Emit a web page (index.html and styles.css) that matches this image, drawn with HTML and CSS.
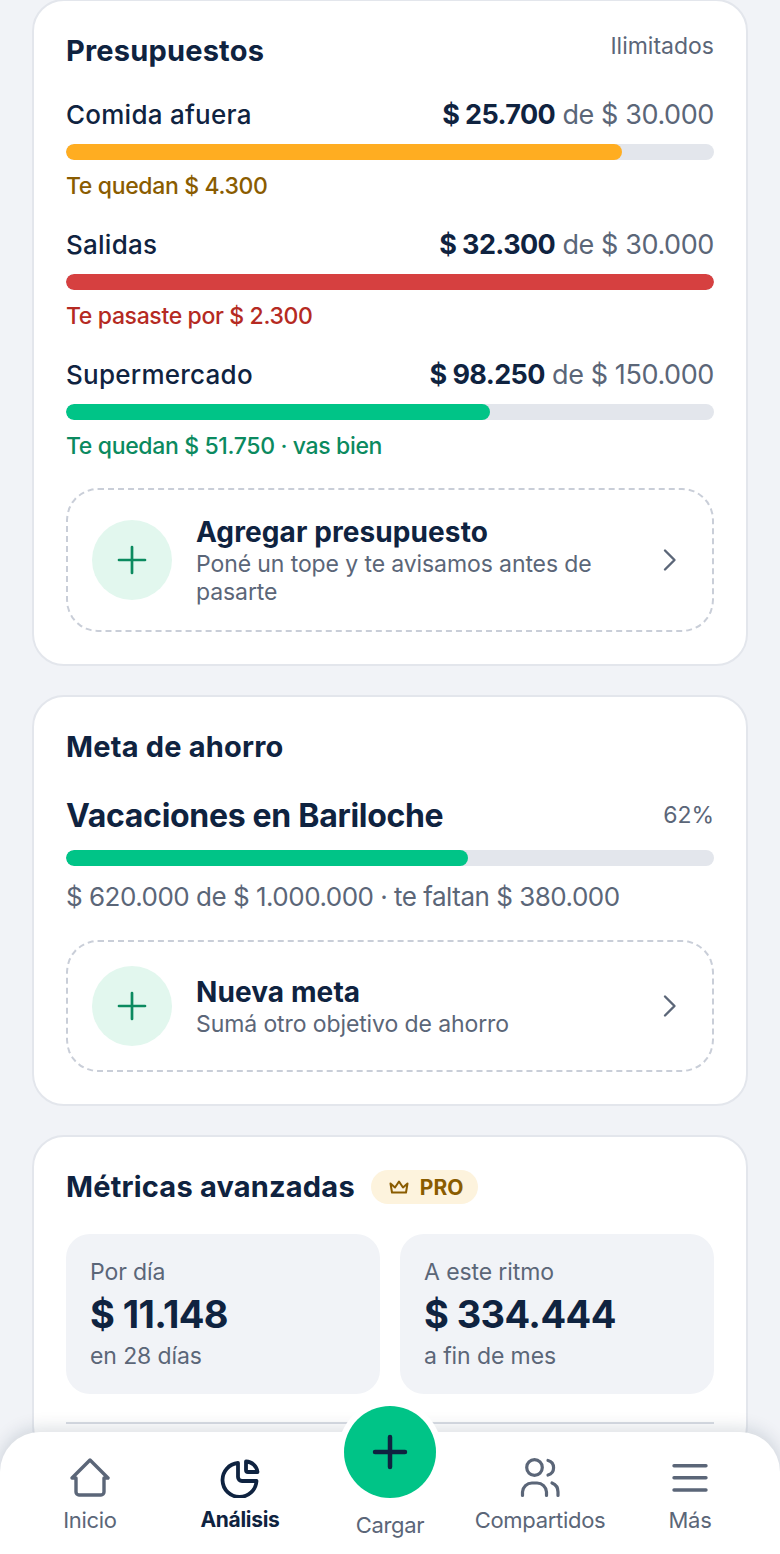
FILE: index.html
```html
<!DOCTYPE html>
<html lang="es">
<head>
  <meta charset="UTF-8">
  <meta name="viewport" content="width=device-width, initial-scale=1.0">
  <title>Análisis</title>
  <link rel="stylesheet" href="styles.css">
</head>
<body>
  <main class="screen">
    <section class="card">
      <div class="card-head">
        <h2>Presupuestos</h2>
        <span class="card-note">Ilimitados</span>
      </div>

      <div class="budget">
        <div class="budget-row">
          <span class="budget-name">Comida afuera</span>
          <span class="budget-amount"><strong>$ 25.700</strong> de $ 30.000</span>
        </div>
        <div class="bar"><div class="bar-fill fill-amber" style="width: 85.8%"></div></div>
        <p class="budget-msg msg-amber">Te quedan $ 4.300</p>
      </div>

      <div class="budget">
        <div class="budget-row">
          <span class="budget-name">Salidas</span>
          <span class="budget-amount"><strong>$ 32.300</strong> de $ 30.000</span>
        </div>
        <div class="bar"><div class="bar-fill fill-red" style="width: 100%"></div></div>
        <p class="budget-msg msg-red">Te pasaste por $ 2.300</p>
      </div>

      <div class="budget">
        <div class="budget-row">
          <span class="budget-name">Supermercado</span>
          <span class="budget-amount"><strong>$ 98.250</strong> de $ 150.000</span>
        </div>
        <div class="bar"><div class="bar-fill fill-green" style="width: 65.5%"></div></div>
        <p class="budget-msg msg-green">Te quedan $ 51.750 · vas bien</p>
      </div>

      <div class="add-box add-budget">
        <div class="add-circle">
          <svg width="32" height="32" viewBox="0 0 32 32" fill="none" stroke="#0b8a5f" stroke-width="2.7" stroke-linecap="round"><path d="M16 3v26M3 16h26"/></svg>
        </div>
        <div class="add-text">
          <div class="add-title">Agregar presupuesto</div>
          <div class="add-sub">Poné un tope y te avisamos antes de pasarte</div>
        </div>
        <svg class="chevron" width="16" height="24" viewBox="0 0 16 24" fill="none" stroke="#5b6678" stroke-width="2.4" stroke-linecap="round" stroke-linejoin="round"><path d="M3 2.500l9.500 9.500-9.500 9.500"/></svg>
      </div>
    </section>

    <section class="card">
      <h2>Meta de ahorro</h2>
      <div class="goal-row">
        <span class="goal-name">Vacaciones en Bariloche</span>
        <span class="goal-pct">62%</span>
      </div>
      <div class="bar"><div class="bar-fill fill-green" style="width: 62%"></div></div>
      <p class="goal-detail">$ 620.000 de $ 1.000.000 · te faltan $ 380.000</p>

      <div class="add-box add-goal">
        <div class="add-circle">
          <svg width="32" height="32" viewBox="0 0 32 32" fill="none" stroke="#0b8a5f" stroke-width="2.7" stroke-linecap="round"><path d="M16 3v26M3 16h26"/></svg>
        </div>
        <div class="add-text">
          <div class="add-title">Nueva meta</div>
          <div class="add-sub">Sumá otro objetivo de ahorro</div>
        </div>
        <svg class="chevron" width="16" height="24" viewBox="0 0 16 24" fill="none" stroke="#5b6678" stroke-width="2.4" stroke-linecap="round" stroke-linejoin="round"><path d="M3 2.500l9.500 9.500-9.500 9.500"/></svg>
      </div>
    </section>

    <section class="card">
      <div class="metrics-head">
        <h2>Métricas avanzadas</h2>
        <span class="pro">
          <svg width="20" height="14" viewBox="0 0 20 14" fill="none" stroke="#8a5c00" stroke-width="2" stroke-linejoin="round" stroke-linecap="round"><path d="M1.500 3.500L6 7.500l4-6 4 6 4.500-4-1.500 9H3z"/></svg>
          PRO
        </span>
      </div>
      <div class="metrics">
        <div class="metric">
          <div class="metric-label">Por día</div>
          <div class="metric-value">$ 11.148</div>
          <div class="metric-label">en 28 días</div>
        </div>
        <div class="metric">
          <div class="metric-label">A este ritmo</div>
          <div class="metric-value">$ 334.444</div>
          <div class="metric-label">a fin de mes</div>
        </div>
      </div>
      <div class="divider"></div>
    </section>
  </main>

  <nav class="tabbar">
    <div class="tab">
      <svg width="40" height="40" viewBox="0 0 40 40" fill="none" stroke="#5b6678" stroke-width="3.400" stroke-linecap="round" stroke-linejoin="round"><path d="M2 20L20 2l18 18h-4v14a3 3 0 0 1-3 3H9a3 3 0 0 1-3-3V20z"/></svg>
      <span>Inicio</span>
    </div>
    <div class="tab tab-active">
      <svg width="40" height="40" viewBox="0 0 40 40" fill="none" stroke="#0f2340" stroke-width="3.800" stroke-linecap="round" stroke-linejoin="round"><path d="M18 5A17 17 0 1 0 36.500 23H22a4 4 0 0 1-4-4z"/><path d="M26 3.500V12a2 2 0 0 0 2 2h9.500A12 12 0 0 0 26 3.500z"/></svg>
      <span>Análisis</span>
    </div>
    <div class="tab tab-add">
      <div class="fab">
        <svg width="40" height="40" viewBox="0 0 40 40" fill="none" stroke="#0f2340" stroke-width="4.500" stroke-linecap="round"><path d="M20 5v30M5 20h30"/></svg>
      </div>
      <span>Cargar</span>
    </div>
    <div class="tab">
      <svg width="40" height="40" viewBox="0 0 40 40" fill="none" stroke="#5b6678" stroke-width="3.200" stroke-linecap="round" stroke-linejoin="round"><circle cx="14.500" cy="9.500" r="7.800"/><path d="M28 2.500a7.500 7.500 0 0 1 0 14.500M2.500 37.500V34a9.500 9.500 0 0 1 9.500-9h5a9.500 9.500 0 0 1 9.500 9v3.500M32 25a9.500 9.500 0 0 1 6 9v3.500"/></svg>
      <span>Compartidos</span>
    </div>
    <div class="tab">
      <svg width="40" height="40" viewBox="0 0 40 40" fill="none" stroke="#5b6678" stroke-width="3.400" stroke-linecap="round"><path d="M4 7.700h32M4 19.800h32M4 32h32"/></svg>
      <span>Más</span>
    </div>
  </nav>
</body>
</html>
```

FILE: styles.css
```css
* {
  box-sizing: border-box;
}

html, body {
  margin: 0;
  padding: 0;
}

body {
  width: 780px;
  height: 1554px;
  overflow: hidden;
  position: relative;
  background: #f1f3f7;
  font-family: 'Inter', 'Noto Sans', sans-serif;
  color: #0f2340;
}

.screen {
  display: flex;
  flex-direction: column;
  gap: 29px;
  padding: 0 32px;
  margin-top: -1px;
}

.card {
  background: #fff;
  border: 2px solid #e3e6ec;
  border-radius: 32px;
  padding: 32px;
}

h2 {
  margin: 0;
  font-size: 29px;
  line-height: 36px;
  font-weight: 700;
  letter-spacing: 0.2px;
}

.card-head {
  display: flex;
  justify-content: space-between;
  align-items: flex-start;
  margin-bottom: 25px;
}

.card-note {
  font-size: 23px;
  line-height: 26px;
  color: #5b6678;
}

.budget {
  margin-bottom: 22px;
}

.budget-row {
  display: flex;
  justify-content: space-between;
  align-items: center;
  height: 40px;
  margin-bottom: 10px;
}

.budget-name {
  font-size: 26px;
  font-weight: 500;
  letter-spacing: 0.25px;
}

.budget-amount {
  font-size: 27px;
  color: #5b6678;
  letter-spacing: -0.4px;
}

.budget-amount strong {
  color: #0f2340;
  font-weight: 700;
  letter-spacing: -0.6px;
}

.bar {
  height: 16px;
  border-radius: 8px;
  background: #e3e6ec;
  overflow: hidden;
}

.bar-fill {
  height: 100%;
  border-radius: 8px;
}

.fill-amber { background: #ffad21; }
.fill-red { background: #d64040; }
.fill-green { background: #00c487; }

.budget-msg {
  margin: 10px 0 0;
  font-size: 23px;
  line-height: 32px;
  font-weight: 550;
  letter-spacing: -0.35px;
}

.msg-amber { color: #8a5c00; }
.msg-red { color: #b52a22; }
.msg-green { color: #0b8a5f; }

.add-box {
  display: flex;
  align-items: center;
  gap: 24px;
  border: 2px dashed #c9ced8;
  border-radius: 32px;
  padding: 0 34px 0 24px;
}

.add-budget {
  height: 144px;
  margin-top: 26px;
}

.add-goal {
  height: 132px;
  margin-top: 25px;
}

.add-circle {
  flex: none;
  width: 80px;
  height: 80px;
  border-radius: 50%;
  background: #e2f7ee;
  display: flex;
  align-items: center;
  justify-content: center;
}

.add-text {
  flex: 1;
  padding-top: 2px;
}

.add-title {
  font-size: 28px;
  line-height: 32px;
  font-weight: 700;
  letter-spacing: 0.1px;
}

.add-sub {
  margin-top: 2px;
  font-size: 23px;
  line-height: 28px;
  color: #5b6678;
  letter-spacing: -0.1px;
}

.chevron {
  flex: none;
}

.goal-row {
  display: flex;
  justify-content: space-between;
  align-items: center;
  margin-top: 30px;
  margin-bottom: 15px;
  height: 40px;
}

.goal-name {
  font-size: 32px;
  font-weight: 700;
  letter-spacing: -0.3px;
}

.goal-pct {
  font-size: 23px;
  color: #5b6678;
}

.goal-detail {
  margin: 13px 0 0;
  font-size: 26px;
  line-height: 36px;
  color: #5b6678;
  letter-spacing: -0.5px;
}

.metrics-head {
  display: flex;
  align-items: center;
  gap: 16px;
  margin-bottom: 29px;
}

.pro {
  display: flex;
  align-items: center;
  gap: 11px;
  height: 34px;
  padding: 0 15px 0 18px;
  border-radius: 17px;
  background: #fdf3dd;
  color: #8a5c00;
  font-size: 21px;
  font-weight: 700;
}

.metrics {
  display: grid;
  grid-template-columns: 1fr 1fr;
  gap: 20px;
}

.metric {
  height: 160px;
  padding: 21px 24px;
  background: #f1f3f7;
  border-radius: 24px;
}

.metric-label {
  font-size: 23px;
  line-height: 34px;
  color: #5b6678;
  letter-spacing: -0.1px;
}

.metric-value {
  font-size: 38px;
  line-height: 50px;
  font-weight: 700;
  letter-spacing: -0.6px;
}

.divider {
  height: 2px;
  background: #d9dde4;
  margin-top: 28px;
}

.tabbar {
  position: absolute;
  left: 0;
  right: 0;
  bottom: 0;
  height: 122px;
  display: grid;
  grid-template-columns: repeat(5, 150px);
  padding: 26px 15px 0;
  background: #fff;
  border-radius: 40px 40px 0 0;
  box-shadow: 0 -3px 18px rgba(15, 35, 64, 0.16);
}

.tab {
  display: flex;
  flex-direction: column;
  align-items: center;
  gap: 7px;
  font-size: 22px;
  line-height: 30px;
  color: #5b6678;
  letter-spacing: -0.3px;
}

.tab-active {
  color: #0f2340;
  font-size: 21px;
  font-weight: 700;
}

.tab-add {
  position: relative;
  padding-top: 52px;
}

.fab {
  position: absolute;
  top: -52px;
  left: 29px;
  width: 92px;
  height: 92px;
  border-radius: 50%;
  background: #00c487;
  box-shadow: 0 0 0 6px #fff;
  display: flex;
  align-items: center;
  justify-content: center;
}
```
